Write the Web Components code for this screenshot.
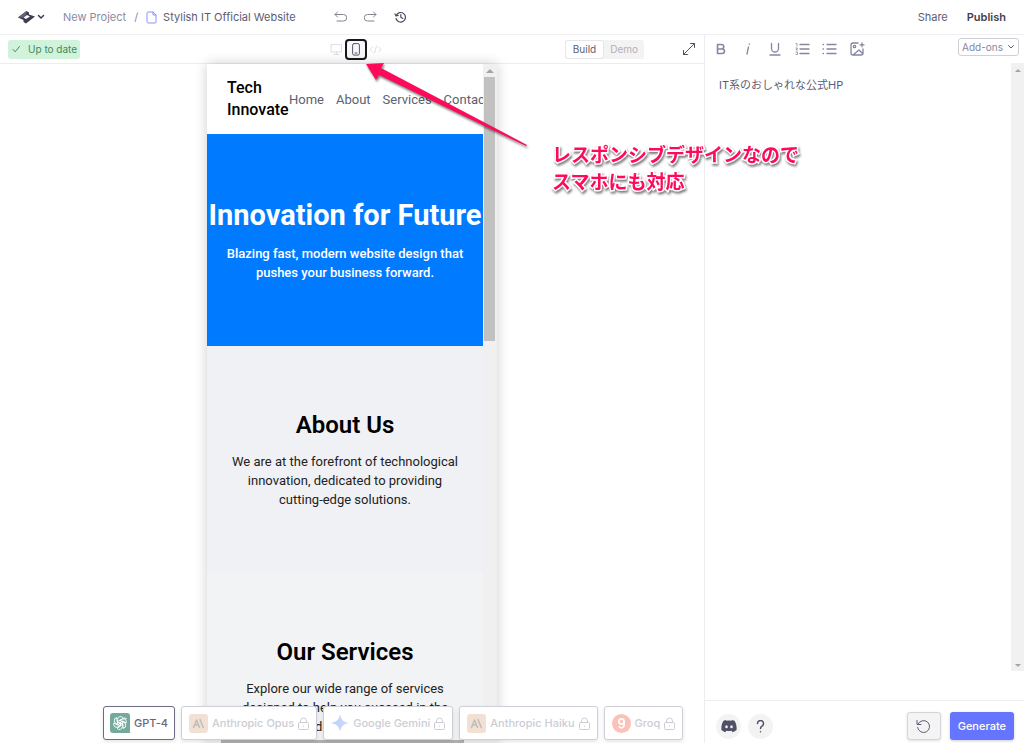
<!DOCTYPE html>
<html lang="ja">
<head>
<meta charset="utf-8">
<meta name="viewport" content="width=device-width, initial-scale=1">
<title>Stylish IT Official Website</title>
<style>
  body {
    margin: 0;
    height: 100vh;
    overflow: hidden;
    background: #fff;
    color: #5c5d74;
    font-family: Inter, 'Noto Sans CJK JP', sans-serif;
    font-size: 11px;
  }
</style>
</head>
<body>
<app-shell>
  <top-bar slot="top"></top-bar>
  <view-toolbar slot="tools"></view-toolbar>
  <phone-preview slot="stage">
    <site-header></site-header>
    <page-section kind="hero">
      <h1 slot="title">Innovation for Future</h1>
      Blazing fast, modern website design that pushes your business forward.
    </page-section>
    <page-section kind="about">
      <h2 slot="title">About Us</h2>
      We are at the forefront of technological innovation, dedicated to providing cutting-edge solutions.
    </page-section>
    <page-section kind="services">
      <h2 slot="title">Our Services</h2>
      Explore our wide range of services designed to help you succeed in the digital era.
    </page-section>
  </phone-preview>
  <model-chip slot="models" brand="gpt" selected>GPT-4</model-chip>
  <model-chip slot="models" brand="anthropic">Anthropic Opus</model-chip>
  <model-chip slot="models" brand="gemini">Google Gemini</model-chip>
  <model-chip slot="models" brand="anthropic">Anthropic Haiku</model-chip>
  <model-chip slot="models" brand="groq">Groq</model-chip>
  <prompt-panel slot="side"></prompt-panel>
</app-shell>
<callout-note>レスポンシブデザインなので<br>スマホにも対応</callout-note>

<script>
  // Small helper: every component clones its own template
  class BaseElement extends HTMLElement {
    constructor() {
      super();
      this.attachShadow({ mode: 'open' });
      const template = document.createElement('template');
      template.innerHTML = this.render();
      this.shadowRoot.appendChild(template.content.cloneNode(true));
    }
  }

  // Icons are stroked in the current colour unless they carry .solid
  const buttonReset = `
    button, select {
      font: inherit;
      color: inherit;
      background: none;
      border: 0;
      padding: 0;
      margin: 0;
      cursor: pointer;
    }
    a { color: inherit; text-decoration: none; }
    svg { display: block; flex: none; fill: none; stroke: currentColor; stroke-linecap: round; stroke-linejoin: round; }
    svg.solid { stroke: none; }
  `;

  // Page frame: top bar, stage on the left, prompt panel on the right
  class AppShell extends BaseElement {
    render() {
      return `
        <style>
          :host {
            display: grid;
            grid-template: 35px minmax(0, 1fr) / minmax(0, 1fr) 320px;
            height: 100vh;
          }
          .top { grid-column: 1 / -1; border-bottom: 1px solid #f0f0f3; }
          main { position: relative; display: flex; flex-direction: column; min-height: 0; overflow: hidden; }
          .stage { flex: 1; min-height: 0; display: flex; justify-content: center; }
          aside { border-left: 1px solid #ededf0; min-height: 0; display: flex; }
          /* The model picker floats over the preview */
          .models { position: absolute; bottom: 3px; left: 103px; display: flex; gap: 6px; }
        </style>
        <div class="top"><slot name="top"></slot></div>
        <main>
          <slot name="tools"></slot>
          <div class="stage"><slot name="stage"></slot></div>
          <div class="models"><slot name="models"></slot></div>
        </main>
        <aside><slot name="side"></slot></aside>
      `;
    }
  }

  class TopBar extends BaseElement {
    render() {
      return `
        <style>
          ${buttonReset}
          :host { display: block; height: 100%; }
          header { display: flex; align-items: center; height: 100%; padding: 0 18px; }
          nav { display: flex; align-items: center; margin-left: 18px; gap: 8px; color: #8a8ba3; }
          nav .current { display: flex; align-items: center; gap: 6px; color: #5c5d74; }
          nav svg { color: #8b93ff; }
          .brand { display: flex; align-items: center; gap: 2px; color: #3c3d4e; }
          .history { display: flex; align-items: center; gap: 17px; margin-left: 38px; color: #83848f; }
          .history .clock { color: #4b4c5e; }
          .actions { display: flex; gap: 19px; margin-left: auto; }
          .publish { font-weight: 600; color: #3f404f; }
        </style>
        <header>
          <button class="brand" aria-label="Menu">
            <svg class="solid" width="17" height="14" viewBox="0 0 17 14">
              <path d="M0 7.500 8.500 1l2.500 1.500V4.500L17 6.500 8 13.500 5.500 12V10z" fill="#3c3d4e"/>
              <path d="M5.500 7.500 9 5l3 1.500L8 9z" fill="#fff"/>
              <path d="M0 7.500 8.500 1v3L5.500 7.500z" fill="#62637a"/>
            </svg>
            <svg width="8" height="6" viewBox="0 0 8 6" stroke-width="1.500"><path d="M1.500 1.500 4 4l2.500-2.500"/></svg>
          </button>
          <nav>
            <a href="#project">New Project</a>
            <span>/</span>
            <a class="current" href="#page">
              <svg width="11" height="13" viewBox="0 0 11 13"><path d="M1 2a1 1 0 0 1 1-1h5l3 3v7a1 1 0 0 1-1 1H2a1 1 0 0 1-1-1zM7 1v3h3"/></svg>
              Stylish IT Official Website
            </a>
          </nav>
          <div class="history">
            <button aria-label="Undo"><svg width="13" height="12" viewBox="0 0 13 12"><path d="M3.500 1 1 3.500 3.500 6M1 3.500h8.500a2.500 2.500 0 0 1 0 6.500H3"/></svg></button>
            <button aria-label="Redo"><svg width="13" height="12" viewBox="0 0 13 12"><path d="M9.500 1 12 3.500 9.500 6M12 3.500H3.500a2.500 2.500 0 0 0 0 6.500H10"/></svg></button>
            <button class="clock" aria-label="History"><svg width="13" height="12" viewBox="0 0 13 12" stroke-width="1.200"><path d="M2.200 4.500A4.800 4.800 0 1 1 2 7.500M1 3l1 2 2.200-.6M6.800 3.500V6.200l2 1.200"/></svg></button>
          </div>
          <div class="actions">
            <button>Share</button>
            <button class="publish">Publish</button>
          </div>
        </header>
      `;
    }
  }

  class ViewToolbar extends BaseElement {
    render() {
      return `
        <style>
          ${buttonReset}
          :host {
            display: grid;
            grid-template-columns: 1fr auto 1fr;
            align-items: center;
            height: 28px;
            padding: 0 8px;
            border-bottom: 1px solid #ededf0;
            font-size: 10px;
          }
          .status {
            justify-self: start;
            display: flex;
            align-items: center;
            gap: 7px;
            height: 19px;
            padding: 0 3px 0 4px;
            border-radius: 3px;
            background: #d1f3dc;
            color: #418a5c;
          }
          .devices { display: flex; align-items: center; gap: 2px; color: #dcdcea; margin-right: -8px; }
          .devices .on { border: 2px solid #16161c; border-radius: 4px; padding: 2px 5px; color: #55566b; background: #f7f7fa; }
          .right { display: flex; align-items: center; justify-content: flex-end; gap: 38px; }
          .expand { color: #4f5065; }
          .mode { display: flex; border-radius: 3px; background: #f3f3f4; }
          .mode button { height: 19px; padding: 0 6px; color: #b0b0ba; }
          .mode .on { border: 1px solid #e6e6ea; padding: 0 7px; background: #fff; color: #5c5d74; border-radius: 3px; }
        </style>
        <div class="status">
          <svg width="9" height="8" viewBox="0 0 9 8"><path d="M1 4.500 3.200 6.800 7.500 1.500"/></svg>
          Up to date
        </div>
        <div class="devices">
          <button aria-label="Desktop"><svg width="13" height="13" viewBox="0 0 13 13"><path d="M1.500 1.500h10v7.500h-10zM4 11.500h5M6.500 9v2.500"/></svg></button>
          <button class="on" aria-label="Mobile"><svg width="8" height="13" viewBox="0 0 8 13"><rect x=".6" y=".6" width="6.800" height="11.500" rx="1.500"/><path d="M3 10h2"/></svg></button>
          <button aria-label="Code"><svg width="13" height="11" viewBox="0 0 13 11"><path d="M3.500 3 1 5.500 3.500 8M9.500 3 12 5.500 9.500 8M7.500 2l-2 7"/></svg></button>
        </div>
        <div class="right">
          <div class="mode"><button class="on">Build</button><button>Demo</button></div>
          <button class="expand" aria-label="Expand"><svg width="14" height="14" viewBox="0 0 14 14"><path d="M1.500 12.500l11-11M8.500 1.500h4v4M1.500 8.500v4h4"/></svg></button>
        </div>
      `;
    }
  }

  // Phone-sized viewport with its two scrollbars
  class PhonePreview extends BaseElement {
    render() {
      return `
        <style>
          :host {
            display: grid;
            grid-template: minmax(0, 1fr) 3px / 276px 14px;
            background: #f0f0f0;
            box-shadow: 0 0 12px rgba(0, 0, 0, 0.2);
            font-family: Roboto, sans-serif;
            color: #222;
            overflow: hidden;
          }
          .page { overflow: hidden; background: #f2f3f5; }
          .bar { display: flex; flex-direction: column; align-items: center; gap: 4px; padding: 5px 2px 0 1px; }
          .up { border: 4px solid transparent; border-top: 0; border-bottom: 4px solid #a3a3a3; }
          .thumb { width: 100%; height: 264px; background: #c1c1c1; }
          .hbar { padding: 0 19px 0 14px; }
          .hbar div { height: 3px; background: #b0b0b0; }
        </style>
        <div class="page"><slot></slot></div>
        <div class="bar"><div class="up"></div><div class="thumb"></div></div>
        <div class="hbar"><div></div></div>
      `;
    }
  }

  class SiteHeader extends BaseElement {
    render() {
      return `
        <style>
          :host { display: flex; align-items: center; height: 70px; padding: 0 20px; background: #fff; }
          .logo { width: 62px; flex: none; font-size: 16px; line-height: 22px; font-weight: 500; color: #000; }
          nav { display: flex; flex: none; gap: 12px; font-size: 13px; }
          a { color: #5a6270; text-decoration: none; }
        </style>
        <div class="logo">Tech Innovate</div>
        <nav>
          <a href="#home">Home</a>
          <a href="#about">About</a>
          <a href="#services">Services</a>
          <a href="#contact">Contact</a>
        </nav>
      `;
    }
  }

  class PageSection extends BaseElement {
    render() {
      return `
        <style>
          :host { display: block; padding: 64px 20px; text-align: center; font-size: 13px; line-height: 19px; }
          ::slotted(*) { margin: 0 0 12px !important; color: #000; font-size: 24px !important; line-height: 30px; font-weight: 600 !important; }
          :host([kind="hero"]) { background: #007bff; color: #fff; font-weight: 500; padding: 64px 0; }
          :host([kind="hero"]) p { padding: 0 18px; }
          :host([kind="hero"]) ::slotted(*) { color: #fff; font-size: 29px !important; line-height: 34px; font-weight: 700 !important; white-space: nowrap; }
          :host([kind="about"]) { background: #f0f1f5; }
          :host([kind="services"]) { background: #f2f3f5; }
          p { margin: 0; }
        </style>
        <slot name="title"></slot>
        <p><slot></slot></p>
      `;
    }
  }

  const brandIcons = {
    gpt: `<svg width="20" height="20" viewBox="0 0 20 20">
        <path d="M3 0h14a3 3 0 0 1 3 3v17H3a3 3 0 0 1-3-3V3a3 3 0 0 1 3-3z" fill="#74aa9c" stroke="none"/>
        <g stroke="#fff" stroke-width=".9">
          <path id="arm" d="M7.600 11.400V6.500a3 3 0 0 1 5.400-1.800M10 7.300l3.400-2a3 3 0 0 1 3 .2"/>
          <path d="M7.600 11.400V6.500a3 3 0 0 1 5.400-1.800L9.500 6.900v3.600" transform="rotate(60 10 10)"/>
          <path d="M7.600 11.400V6.500a3 3 0 0 1 5.400-1.800L9.500 6.900v3.600" transform="rotate(120 10 10)"/>
          <path d="M7.600 11.400V6.500a3 3 0 0 1 5.400-1.800L9.500 6.900v3.600" transform="rotate(180 10 10)"/>
          <path d="M7.600 11.400V6.500a3 3 0 0 1 5.400-1.800L9.500 6.900v3.600" transform="rotate(240 10 10)"/>
          <path d="M7.600 11.400V6.500a3 3 0 0 1 5.400-1.800L9.500 6.900v3.600" transform="rotate(300 10 10)"/>
        </g>
      </svg>`,
    anthropic: `<svg width="19" height="19" viewBox="0 0 19 19">
        <rect width="19" height="19" rx="3" fill="#d9a982" stroke="none"/>
        <path d="M4.500 13.500 7.500 6l3 7.500M5.600 11h3.800M11 5.500l3.200 8" stroke="#4a4340" stroke-width="1.500"/>
      </svg>`,
    gemini: `<svg class="solid" width="18" height="18" viewBox="0 0 18 18">
        <defs><linearGradient id="g" x1="0" y1="0" x2="1" y2="0"><stop offset="0" stop-color="#1f86f0"/><stop offset="1" stop-color="#8f8fe8"/></linearGradient></defs>
        <path d="M9 0c.8 5.500 3.500 8.200 9 9-5.500.8-8.200 3.500-9 9-.8-5.500-3.500-8.200-9-9 5.500-.8 8.200-3.500 9-9z" fill="url(#g)"/>
      </svg>`,
    groq: `<svg width="19" height="19" viewBox="0 0 19 19">
        <circle cx="9.500" cy="9.500" r="9.500" fill="#f55036" stroke="none"/>
        <g stroke="#fff" stroke-width="1.700"><circle cx="9.500" cy="7.500" r="2.600"/><path d="M12.100 7.500v3.700a2.600 2.600 0 0 1-4.800 1.400"/></g>
      </svg>`
  };

  class ModelChip extends BaseElement {
    render() {
      const selected = this.hasAttribute('selected');
      const lock = `<svg class="lock" width="11" height="13" viewBox="0 0 11 13"><rect x=".5" y="5.500" width="10" height="7" rx="1"/><path d="M2.500 5.500V4a3 3 0 0 1 6 0v1.500M5.500 9v.5"/></svg>`;
      return `
        <style>
          ${buttonReset}
          :host { display: block; }
          button {
            display: flex;
            align-items: center;
            gap: 4px;
            height: 34px;
            padding: 0 7px;
            border: 1px solid #cfcfd8;
            border-radius: 3px;
            background: #fff;
            color: #cdcdd6;
            font-weight: 500;
            white-space: nowrap;
            box-shadow: 0 2px 4px rgba(0, 0, 0, 0.1);
          }
          :host([selected]) button { border-color: #6c6a85; color: #66677f; padding: 0 6px; }
          .icon { opacity: 0.35; }
          :host([selected]) .icon { opacity: 1; }
        </style>
        <button>
          <span class="icon">${brandIcons[this.getAttribute('brand')]}</span>
          <slot></slot>
          ${selected ? '' : lock}
        </button>
      `;
    }
  }

  class PromptPanel extends BaseElement {
    render() {
      return `
        <style>
          ${buttonReset}
          :host { display: flex; flex-direction: column; flex: 1; min-width: 0; }
          .tools { display: flex; align-items: center; height: 28px; padding: 0 5px 0 9px; color: #8586a0; }
          .tools > button { display: flex; justify-content: center; width: 14px; margin-right: 13px; }
          .tools > button:nth-of-type(6) { width: 17px; }
          .addons {
            display: flex;
            align-items: center;
            margin-left: auto;
            margin-bottom: 4px;
            height: 16px;
            padding: 0 3px;
            border: 1px solid #cfcfda;
            border-radius: 3px;
            font-size: 10px;
          }
          select { appearance: none; width: 45px; }
          .addons svg { color: #5c5d74; }
          .editor { display: flex; flex: 1; min-height: 0; margin-bottom: 29px; }
          textarea {
            flex: 1;
            min-width: 0;
            border: 0;
            outline: 0;
            resize: none;
            overflow: hidden;
            padding: 13px 14px;
            background: none;
            color: #5c5d74;
            font-family: Inter, 'Noto Sans CJK JP', sans-serif;
            font-size: 11px;
            line-height: 18px;
          }
          .bar { display: flex; flex-direction: column; align-items: center; justify-content: space-between; width: 13px; padding: 6px 0 4px; box-sizing: border-box; background: #f1f1f1; }
          .bar i { border: 3px solid transparent; }
          .bar .up { border-top: 0; border-bottom-color: #a3a3a3; }
          .bar .down { border-bottom: 0; border-top-color: #a3a3a3; }
          footer { display: flex; align-items: center; gap: 7px; height: 43px; padding: 8px 10px 0 11px; box-sizing: border-box; border-top: 1px solid #ededf0; }
          .round { display: flex; align-items: center; justify-content: center; width: 25px; height: 25px; border-radius: 50%; background: #f3f3f4; color: #4f5065; }
          .retry { display: flex; align-items: center; justify-content: center; width: 34px; height: 28px; margin-left: auto; border: 1px solid #d4d4da; border-radius: 3px; background: #f4f4f5; box-shadow: 0 1px 3px rgba(0, 0, 0, 0.12); }
          .generate { height: 28px; padding: 0 8px; margin-left: 2px; border-radius: 3px; background: #6675ff; color: #fff; font-weight: 500; box-shadow: 0 1px 3px rgba(0, 0, 0, 0.2); }
        </style>
        <div class="tools">
          <button aria-label="Bold"><svg width="10" height="12" viewBox="0 0 10 12" stroke-width="1.600"><path d="M1.500 1.500h4a2.200 2.200 0 0 1 0 4.500h-4zM1.500 6h4.700a2.200 2.200 0 0 1 0 4.500H1.500z"/></svg></button>
          <button aria-label="Italic"><svg width="6" height="12" viewBox="0 0 6 12" stroke-width="1.300"><path d="M3.500 4 2 11M4.300 1v.3"/></svg></button>
          <button aria-label="Underline"><svg width="12" height="14" viewBox="0 0 12 14" stroke-width="1.300"><path d="M2.500 1.500v5a3.500 3.500 0 0 0 7 0v-5M1 13h10"/></svg></button>
          <button aria-label="Numbered list"><svg width="15" height="12" viewBox="0 0 15 12" stroke-width="1.300"><path d="M5 1.500h9M5 6h9M5 10.500h9"/><path d="M1 .5h1v2.500M1 5h1.500L1 7h1.500M1 9h1.500v2.500H1" stroke-width=".8"/></svg></button>
          <button aria-label="Bulleted list"><svg width="15" height="12" viewBox="0 0 15 12" stroke-width="1.300"><path d="M5 1.500h9M5 6h9M5 10.500h9M1 1.500h.5M1 6h.5M1 10.500h.5"/></svg></button>
          <button aria-label="Add image"><svg width="15" height="14" viewBox="0 0 15 14" stroke-width="1.300"><path d="M8 1H3a2 2 0 0 0-2 2v8a2 2 0 0 0 2 2h8a2 2 0 0 0 2-2V7M12 .8v4M10 2.800h4M3 13l6-5 4 4"/><circle cx="4.500" cy="4.500" r="1.200"/></svg></button>
          <div class="addons">
            <select aria-label="Add-ons"><option>Add-ons</option></select>
            <svg width="8" height="6" viewBox="0 0 8 6"><path d="M1.500 1.500 4 4l2.500-2.500"/></svg>
          </div>
        </div>
        <div class="editor">
          <textarea aria-label="Prompt">IT系のおしゃれな公式HP</textarea>
          <div class="bar"><i class="up"></i><i class="down"></i></div>
        </div>
        <footer>
          <button class="round" aria-label="Discord"><svg class="solid" width="16" height="13" viewBox="0 0 16 13"><path d="M5.500.8 5 .1C3.700.4 2.700.8 2.300 1.100.8 3.500.2 6.500.4 10c1.200 1.100 2.500 1.800 4 2.200l.9-1.500c1.800.5 3.600.5 5.400 0l.9 1.500c1.500-.4 2.800-1.100 4-2.200.2-3.500-.4-6.500-1.900-8.900C13.300.8 12.300.4 11 .1l-.5.7a12 12 0 0 0-5 0z" fill="#4f5065"/><ellipse cx="5.500" cy="6.800" rx="1.300" ry="1.500" fill="#f3f3f4"/><ellipse cx="10.500" cy="6.800" rx="1.300" ry="1.500" fill="#f3f3f4"/></svg></button>
          <button class="round" aria-label="Help"><svg width="9" height="13" viewBox="0 0 9 13" stroke-width="1.500"><path d="M1.500 3.500a3 3 0 1 1 4.500 2.600C4.800 6.800 4.500 7.300 4.500 8.500M4.500 11.700v.1"/></svg></button>
          <button class="retry" aria-label="Regenerate"><svg width="15" height="15" viewBox="0 0 15 15"><path d="M2 5.200A6 6 0 1 1 1.600 8.500M1 1.500v4h4"/></svg></button>
          <button class="generate">Generate</button>
        </footer>
      `;
    }
  }

  // Annotation laid over the whole window
  class CalloutNote extends BaseElement {
    render() {
      return `
        <style>
          :host { display: block; position: absolute; left: 366px; top: 60px; pointer-events: none; }
          svg { display: block; overflow: visible; filter: drop-shadow(1px 2px 1px rgba(0, 0, 0, 0.5)); }
          p {
            position: absolute;
            left: 186px;
            top: 80px;
            margin: 0;
            white-space: nowrap;
            color: #ff0a5a;
            font-family: 'Noto Sans CJK JP', sans-serif;
            font-size: 19px;
            line-height: 27px;
            font-weight: 700;
            -webkit-text-stroke: 3px #fff;
            paint-order: stroke fill;
            filter: drop-shadow(1px 2px 1px rgba(0, 0, 0, 0.5));
          }
        </style>
        <svg width="160" height="86" viewBox="0 0 160 86"><path d="M0 4l18-1-3 5 146 77-1 1L13 15l-3 5z" fill="#ff0a5a"/></svg>
        <p><slot></slot></p>
      `;
    }
  }

  customElements.define('app-shell', AppShell);
  customElements.define('top-bar', TopBar);
  customElements.define('view-toolbar', ViewToolbar);
  customElements.define('phone-preview', PhonePreview);
  customElements.define('site-header', SiteHeader);
  customElements.define('page-section', PageSection);
  customElements.define('model-chip', ModelChip);
  customElements.define('prompt-panel', PromptPanel);
  customElements.define('callout-note', CalloutNote);
</script>
</body>
</html>
